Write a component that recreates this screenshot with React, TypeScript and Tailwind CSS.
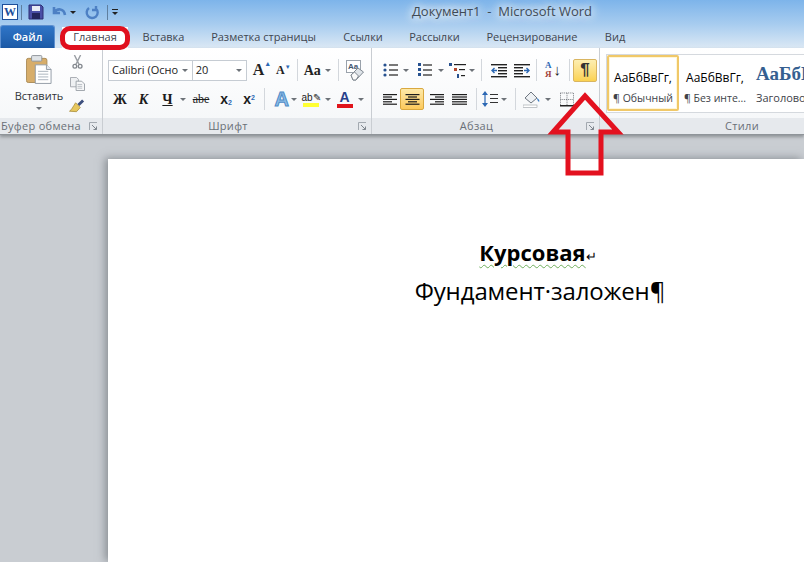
import React from "react"

const ui = "font-['Open_Sans','Noto_Sans',sans-serif]"

function Caret({ className = "" }: { className?: string }) {
  return <span className={`block w-0 h-0 border-x-[3px] border-x-transparent border-t-[3px] border-t-[#6d7278] ${className}`} />
}

function Sep({ className = "" }: { className?: string }) {
  return <span className={`block w-px h-[22px] bg-[#d3d7dc] shrink-0 ${className}`} />
}

function Launcher() {
  return (
    <svg width="9" height="9" viewBox="0 0 9 9" className="shrink-0">
      <path d="M0.5 8V0.5H8" fill="none" stroke="#a3a9b0" />
      <path d="M3 3L7.5 7.5M7.5 4.5V7.5H4.5" fill="none" stroke="#7f868e" />
    </svg>
  )
}

function Lines({ align }: { align: "left" | "center" | "right" | "justify" }) {
  const rows = [14, 9, 14, 9, 14]
  return (
    <svg width="15" height="11" viewBox="0 0 15 11">
      {rows.map((w, i) => {
        const width = align === "justify" ? 15 : w
        const x = align === "left" || align === "justify" ? 0 : align === "right" ? 15 - width : (15 - width) / 2
        return <rect key={i} x={x} y={i * 2.4} width={width} height="1.2" fill="#1c1c1c" />
      })}
    </svg>
  )
}

function Bullets() {
  return (
    <svg width="15" height="14" viewBox="0 0 15 14">
      {[1, 6, 11].map((y) => (
        <g key={y}>
          <circle cx="2" cy={y + 1} r="1.6" fill="#27518f" />
          <rect x="6" y={y + 0.4} width="9" height="1.2" fill="#222" />
        </g>
      ))}
    </svg>
  )
}

function Numbers() {
  return (
    <svg width="15" height="14" viewBox="0 0 15 14">
      {[1, 6, 11].map((y) => (
        <g key={y}>
          <rect x="1" y={y - 1} width="3" height="3" fill="#27518f" />
          <rect x="6" y={y + 0.4} width="9" height="1.2" fill="#222" />
        </g>
      ))}
    </svg>
  )
}

function MultiLevel() {
  return (
    <svg width="17" height="15" viewBox="0 0 17 15">
      <rect x="0" y="0" width="3" height="3" fill="#27518f" />
      <rect x="5" y="1" width="12" height="1.2" fill="#222" />
      <rect x="5" y="5" width="3" height="3" fill="#b4472e" />
      <rect x="10" y="6" width="6" height="1.2" fill="#222" />
      <rect x="8" y="11" width="2" height="4" fill="#27518f" />
      <rect x="12" y="12" width="4" height="1.2" fill="#222" />
    </svg>
  )
}

function Indent({ flip = false }: { flip?: boolean }) {
  return (
    <svg width="16" height="15" viewBox="0 0 16 15" className={flip ? "-scale-x-100" : ""}>
      {[0, 3, 6, 9, 12].map((y) => (
        <rect key={y} x={y === 0 || y === 12 ? 0 : 7} y={y + 1} width={y === 0 || y === 12 ? 16 : 9} height="1.4" fill="#222" />
      ))}
      <path d="M6 7.5H1M3.5 5L1 7.5L3.5 10" fill="none" stroke="#2c68b4" strokeWidth="1.4" />
    </svg>
  )
}

function PasteIcon() {
  return (
    <svg width="26" height="31" viewBox="0 0 28 32">
      <rect x="0.5" y="4" width="22" height="26" rx="2" fill="#d7ad6a" stroke="#a98a56" />
      <rect x="6" y="1" width="11" height="6" rx="1" fill="#dfe3e6" stroke="#8d9297" />
      <path d="M10 11H22L27 16V31H10Z" fill="#fff" stroke="#8f98a3" />
      <path d="M22 11V16H27" fill="#e3e8ee" stroke="#8f98a3" />
      <path d="M13 18H24M13 21H24M13 24H24M13 27H24" stroke="#a8b0ba" />
    </svg>
  )
}

function Scissors() {
  return (
    <svg width="11" height="14" viewBox="0 0 14 18">
      <path d="M3 0L9 12M11 0L5 12" stroke="#9a9ea3" strokeWidth="1.8" />
      <circle cx="3.6" cy="14.5" r="2.4" fill="none" stroke="#83888e" strokeWidth="1.7" />
      <circle cx="10.4" cy="14.5" r="2.4" fill="none" stroke="#83888e" strokeWidth="1.7" />
    </svg>
  )
}

function CopyIcon() {
  return (
    <svg width="15" height="14" viewBox="0 0 16 15">
      <path d="M0.5 0.5H7L9 2.5V10.5H0.5Z" fill="#eef0f2" stroke="#a2a7ad" />
      <path d="M6.5 4.5H12.5L15.5 7.5V14.5H6.5Z" fill="#f6f7f8" stroke="#999fa6" />
      <path d="M8 8H13M8 10H13M8 12H13" stroke="#b8bdc3" />
    </svg>
  )
}

function Brush() {
  return (
    <svg width="16" height="15" viewBox="0 0 17 15">
      <path d="M10 6L15 1" stroke="#3d4f7d" strokeWidth="3" />
      <path d="M7 3.5L12 8.5L8 13L0.5 12.5C3 11 4 8 7 3.5Z" fill="#e6c75e" stroke="#a58a35" strokeWidth="0.8" />
    </svg>
  )
}

function Eraser() {
  return (
    <svg width="18" height="21" viewBox="0 0 18 21">
      <rect x="0.5" y="0.5" width="14" height="12" fill="#fff" stroke="#9aa2ab" />
      <text x="2" y="9" fontSize="8" fontWeight="700" fill="#44586f" fontFamily="Liberation Sans, sans-serif">Aa</text>
      <path d="M5 15L12 8L17.5 12L10 20H7Z" fill="#dfe4e9" stroke="#7f8790" />
      <path d="M5 15L8.5 12L12.5 16L10 20H7Z" fill="#fafafa" stroke="#7f8790" />
    </svg>
  )
}

function Spacing() {
  return (
    <svg width="16" height="16" viewBox="0 0 16 16">
      <path d="M3 0L6 4H0ZM3 16L0 12H6Z" fill="#2c68b4" />
      <rect x="2.4" y="3" width="1.2" height="10" fill="#2c68b4" />
      <path d="M8 3.5H16M8 7.5H16M8 11.5H16" stroke="#333" strokeWidth="1.2" />
    </svg>
  )
}

function Bucket() {
  return (
    <svg width="18" height="17" viewBox="0 0 18 17">
      <path d="M8 1L14 7L8 12L2 7Z" fill="#eef1f4" stroke="#6e7680" />
      <path d="M14 7C16 8 17 10 16 11C15 10 14 9 14 7Z" fill="#3c7dc4" />
      <rect x="0" y="14" width="14" height="2.4" fill="#fff" stroke="#9aa0a6" strokeWidth="0.6" />
    </svg>
  )
}

function Borders() {
  return (
    <svg width="14" height="15" viewBox="0 0 15 15">
      <path d="M0.5 0.5H14.5V14.5M0.5 0.5V14.5M7.5 0.5V14.5M0.5 7.5H14.5" fill="none" stroke="#6a6f75" strokeDasharray="1 1" />
      <rect x="0" y="13.4" width="15" height="1.6" fill="#222" />
    </svg>
  )
}

function Group({ label, className, labelClass, children }: { label: string; className: string; labelClass: string; children: React.ReactNode }) {
  return (
    <section className={`flex flex-col shrink-0 border-r border-[#c9cdd2] ${className}`}>
      <div className="flex-1 min-h-0">{children}</div>
      <div className={`h-[16px] flex items-center justify-center relative bg-[#e6e9ed] text-[11px] text-[#6a7077] tracking-[0.3px] whitespace-nowrap ${labelClass}`}>
        {label}
        <span className="absolute right-[4px] top-[4px]"><Launcher /></span>
      </div>
    </section>
  )
}

function FontGroup() {
  return (
    <Group label="Шрифт" className="w-[269px]" labelClass="pr-[18px]">
      <div className="pl-[5px]">
        <div className="flex items-center h-[22px] mt-[11px]">
          <div className="w-[85px] h-[21px] border border-[#c6ccd3] bg-white flex items-center justify-between pl-[3px] pr-[4px] text-[11px] text-[#222] whitespace-nowrap">
            Calibri (Осно <Caret />
          </div>
          <div className="w-[55px] h-[21px] border border-l-0 border-[#c6ccd3] bg-white flex items-center justify-between pl-[3px] pr-[4px] text-[11px] text-[#222]">
            20 <Caret />
          </div>
          <div className="w-[23px] ml-[3px] flex justify-center items-start font-['Liberation_Serif',serif] font-bold text-[16px] leading-none text-[#222]">
            A<span className="text-[7px] text-[#2c68b4] -mt-[1px]">▲</span>
          </div>
          <div className="w-[20px] flex justify-center items-start font-['Liberation_Serif',serif] font-bold text-[12px] leading-none text-[#222]">
            A<span className="text-[6px] text-[#2c68b4]">▼</span>
          </div>
          <Sep className="ml-[4px]" />
          <div className="w-[34px] pl-[4px] flex items-center justify-center gap-[4px] font-['Liberation_Serif',serif] font-bold text-[14px] text-[#222]">
            Aa<Caret />
          </div>
          <Sep className="ml-[6px]" />
          <div className="w-[32px] flex justify-center"><Eraser /></div>
        </div>
        <div className="flex items-center h-[24px] mt-[6px] font-['Liberation_Serif',serif] font-bold text-[#1c1c1c]">
          <div className="w-[24px] text-center text-[14px]">Ж</div>
          <div className="w-[23px] text-center text-[14px] italic">К</div>
          <div className="w-[25px] text-center text-[14px] underline">Ч</div>
          <div className="w-[6px] flex justify-center"><Caret /></div>
          <div className="w-[30px] text-center text-[12px] font-normal line-through">abe</div>
          <div className="w-[20px] text-center text-[14px] font-['Liberation_Sans',sans-serif]">x<sub className="text-[7px] text-[#2c68b4]">2</sub></div>
          <div className="w-[26px] text-center text-[14px] font-['Liberation_Sans',sans-serif]">x<sup className="text-[7px] text-[#2c68b4]">2</sup></div>
          <Sep className="ml-[2px]" />
          <div className="w-[24px] text-right text-[20px] leading-none text-[#8dbde6] font-['Liberation_Sans',sans-serif] [-webkit-text-stroke:1px_#4f8cc7]">A</div>
          <div className="w-[8px] flex justify-end"><Caret /></div>
          <div className="w-[28px] flex flex-col items-center font-['Liberation_Sans',sans-serif] font-normal text-[10px] leading-[11px]">
            <span>ab✎</span>
            <span className="block w-[16px] h-[4px] bg-[#ffff33]" />
          </div>
          <Caret />
          <div className="w-[27px] flex flex-col items-center font-['Liberation_Sans',sans-serif] text-[14px] leading-[13px] text-[#26408a]">
            <span>A</span>
            <span className="block w-[16px] h-[4px] bg-[#e0141b]" />
          </div>
          <Caret />
        </div>
      </div>
    </Group>
  )
}

function ParagraphGroup() {
  return (
    <Group label="Абзац" className="w-[228px]" labelClass="pr-[18px]">
      <div className="pl-[8px]">
        <div className="flex items-center h-[22px] mt-[11px]">
          <div className="w-[20px] flex justify-center"><Bullets /></div>
          <div className="w-[12px] flex justify-center"><Caret /></div>
          <div className="w-[21px] ml-[2px] flex justify-center"><Numbers /></div>
          <div className="w-[12px] flex justify-center"><Caret /></div>
          <div className="w-[20px] flex justify-center"><MultiLevel /></div>
          <div className="w-[10px] flex justify-center"><Caret /></div>
          <Sep className="ml-[4px]" />
          <div className="w-[23px] ml-[5px] flex justify-center"><Indent /></div>
          <div className="w-[23px] flex justify-center"><Indent flip /></div>
          <Sep className="ml-[3px]" />
          <div className="w-[32px] flex items-center justify-center gap-[2px] font-['Liberation_Serif',serif] font-bold text-[9px] leading-[9px]">
            <span className="flex flex-col"><span className="text-[#2c68b4]">А</span><span className="text-[#a3423a]">Я</span></span>
            <span className="text-[15px] font-normal text-[#222]">↓</span>
          </div>
          <Sep />
          <div className="ml-[3px] w-[24px] h-[23px] flex items-center justify-center rounded-[2px] border border-[#d9b560] bg-gradient-to-b from-[#fdeeb0] to-[#fbd24f] text-[17px] font-bold text-[#333] font-['Liberation_Sans',sans-serif]">¶</div>
        </div>
        <div className="flex items-center h-[24px] mt-[6px]">
          <div className="w-[20px] flex justify-center"><Lines align="left" /></div>
          <div className="w-[24px] h-[22px] flex items-center justify-center rounded-[2px] border border-[#d9a83f] bg-gradient-to-b from-[#fde9a8] to-[#fcc95a]"><Lines align="center" /></div>
          <div className="w-[24px] flex justify-center"><Lines align="right" /></div>
          <div className="w-[23px] flex justify-center"><Lines align="justify" /></div>
          <Sep className="ml-[5px]" />
          <div className="w-[22px] ml-[2px] flex justify-center"><Spacing /></div>
          <Caret />
          <Sep className="ml-[8px]" />
          <div className="w-[26px] ml-[3px] flex justify-center"><Bucket /></div>
          <Caret />
          <div className="w-[25px] ml-[3px] flex justify-center"><Borders /></div>
        </div>
      </div>
    </Group>
  )
}

function StyleCard({ sample, name, active = false }: { sample: string; name: string; active?: boolean }) {
  return (
    <div className={`w-[72px] h-[56px] shrink-0 flex flex-col items-center rounded-[2px] border-2 whitespace-nowrap ${active ? "border-[#f0c868] shadow-[inset_0_0_0_1px_#fff6d8]" : "border-transparent"}`}>
      <span className="mt-[11px] h-[20px] text-[12px] leading-[20px] text-black">{sample}</span>
      <span className="mt-[3px] text-[10.5px] leading-[14px] text-[#3e4349]">{name}</span>
    </div>
  )
}

function Ribbon() {
  return (
    <div className={`flex h-[87px] bg-gradient-to-b from-white to-[#f4f6f8] border-b border-[#8f9499] shadow-[0_2px_3px_rgba(70,75,80,0.45)] relative ${ui}`}>
      <Group label="Буфер обмена" className="w-[103px]" labelClass="pr-[20px]">
        <div className="flex h-full">
          <div className="w-[58px] ml-[10px] flex flex-col items-center pt-[6px] text-[11px] text-[#2f3338] whitespace-nowrap">
            <PasteIcon />
            <span className="mt-[4px] leading-[14px]">Вставить</span>
            <Caret className="mt-[4px]" />
          </div>
          <div className="flex flex-col items-center gap-[8px] pt-[7px] w-[18px]">
            <Scissors />
            <CopyIcon />
            <Brush />
          </div>
        </div>
      </Group>
      <FontGroup />
      <ParagraphGroup />
      <section className="flex-1 min-w-0 flex flex-col overflow-hidden">
        <div className="flex-1 pt-[6px] pl-[6px]">
          <div className="flex items-start h-[59px] border border-[#d5d9de] border-r-0 bg-white overflow-hidden">
            <StyleCard sample="АаБбВвГг," name="¶ Обычный" active />
            <StyleCard sample="АаБбВвГг," name="¶ Без инте..." />
            <div className="w-[72px] shrink-0 ml-[5px] flex flex-col whitespace-nowrap">
              <span className="mt-[6px] h-[26px] text-[19px] leading-[26px] font-bold text-[#365f91] font-['Liberation_Serif',serif]">АаБбВ</span>
              <span className="mt-[4px] text-[11px] leading-[14px] text-[#3e4349]">Заголово</span>
            </div>
          </div>
        </div>
        <div className="h-[16px] pl-[80px] flex items-center justify-center bg-[#e6e9ed] text-[11px] text-[#6a7077] tracking-[0.3px]">Стили</div>
      </section>
    </div>
  )
}

function TitleBar() {
  return (
    <div className={`h-[24px] flex items-center pl-[2px] ${ui}`}>
      <div className="w-[16px] h-[16px] border border-[#1d4f9a] bg-white flex items-center justify-center text-[12px] font-bold leading-none text-[#1d4f9a] font-['Liberation_Serif',serif]">W</div>
      <span className="block w-px h-[15px] bg-[#5f7f9f] ml-[3px]" />
      <svg width="16" height="16" viewBox="0 0 16 16" className="ml-[6px]">
        <path d="M1 1H13L15 3V15H1Z" fill="#4a4fa6" stroke="#2c2f72" />
        <rect x="4" y="2" width="8" height="5" fill="#e8ecf5" />
        <rect x="4" y="9" width="8" height="6" fill="#23265e" />
      </svg>
      <svg width="16" height="14" viewBox="0 0 16 14" className="ml-[7px]">
        <path d="M3 2V8H9M3.5 7.5C6 3 13 3 14 10" fill="none" stroke="#4d80c4" strokeWidth="2.6" />
      </svg>
      <Caret className="ml-[3px] !border-t-[#222]" />
      <svg width="15" height="15" viewBox="0 0 15 15" className="ml-[9px]">
        <path d="M11 3.5A5.5 5.5 0 1 1 4 3M11 1V5H7" fill="none" stroke="#4d80c4" strokeWidth="2.4" />
      </svg>
      <span className="block w-px h-[15px] bg-[#5f7f9f] ml-[7px]" />
      <div className="ml-[4px] flex flex-col items-center gap-[2px]">
        <span className="block w-[6px] h-px bg-[#222]" />
        <Caret className="!border-t-[#222]" />
      </div>
      <div className="flex-1 text-center pl-[82px] text-[13px] tracking-[0px] text-[#3f4a55] whitespace-nowrap [text-shadow:0_0_10px_#fff,0_0_10px_#fff,0_0_16px_#fff]">
        Документ1&nbsp; -&nbsp; Microsoft Word
      </div>
    </div>
  )
}

function TabRow() {
  return (
    <div className={`h-[24px] flex items-end text-[11px] text-[#3f4650] ${ui}`}>
      <div className="w-[55px] h-[23px] rounded-t-[3px] bg-gradient-to-b from-[#2f75c7] to-[#1c5aa6] border-t border-x border-[#5c8fd0] text-white font-semibold flex items-center justify-center">Файл</div>
      <div className="w-[66px] h-[21px] ml-[7px] bg-white flex items-center justify-center">Главная</div>
      <div className="w-[71px] h-[22px] flex items-center justify-center">Вставка</div>
      <div className="w-[129px] h-[22px] flex items-center justify-center">Разметка страницы</div>
      <div className="w-[70px] h-[22px] flex items-center justify-center">Ссылки</div>
      <div className="w-[73px] h-[22px] flex items-center justify-center">Рассылки</div>
      <div className="w-[122px] h-[22px] flex items-center justify-center">Рецензирование</div>
      <div className="w-[44px] h-[22px] flex items-center justify-center">Вид</div>
    </div>
  )
}

function Page() {
  return (
    <main className="flex-1 min-h-0 pt-[24px] pl-[108px] bg-[#c9cdd2] overflow-hidden">
      <div className="h-full bg-white shadow-[-3px_-1px_8px_rgba(90,95,100,0.55)] pt-[74px] font-['Open_Sans','Noto_Sans',sans-serif] text-black overflow-hidden">
        <div className="w-[864px] flex flex-col items-center">
          <p className="h-[38px] pr-[4px] text-[22px] leading-[38px] font-bold whitespace-nowrap">
            <span className="underline decoration-wavy decoration-[#6fae5c] decoration-1 underline-offset-[3px]">Курсовая</span>
            <span className="font-normal text-[13px]">↵</span>
          </p>
          <p className="text-[24px] leading-[40px] tracking-[-0.1px] whitespace-nowrap">Фундамент·заложен¶</p>
        </div>
      </div>
    </main>
  )
}

export default function App() {
  return (
    <div className="relative w-[804px] h-[562px] flex flex-col overflow-hidden bg-[#c9cdd2]">
      <div className="bg-gradient-to-b from-[#7db4ea] via-[#a7ccef] to-[#dbe8f4]">
        <TitleBar />
        <TabRow />
      </div>
      <Ribbon />
      <Page />
      {/* annotations drawn over the screenshot */}
      <div className="absolute left-[60px] top-[26px] w-[70px] h-[24px] rounded-[10px] border-[5px] border-[#e0101e]" />
      <svg width="80" height="92" viewBox="0 0 80 92" className="absolute left-[545px] top-[88px]">
        <path d="M40 8L73 44H56V85H23V44H8Z" fill="none" stroke="#e3111f" strokeWidth="5" strokeLinejoin="miter" />
      </svg>
    </div>
  )
}
